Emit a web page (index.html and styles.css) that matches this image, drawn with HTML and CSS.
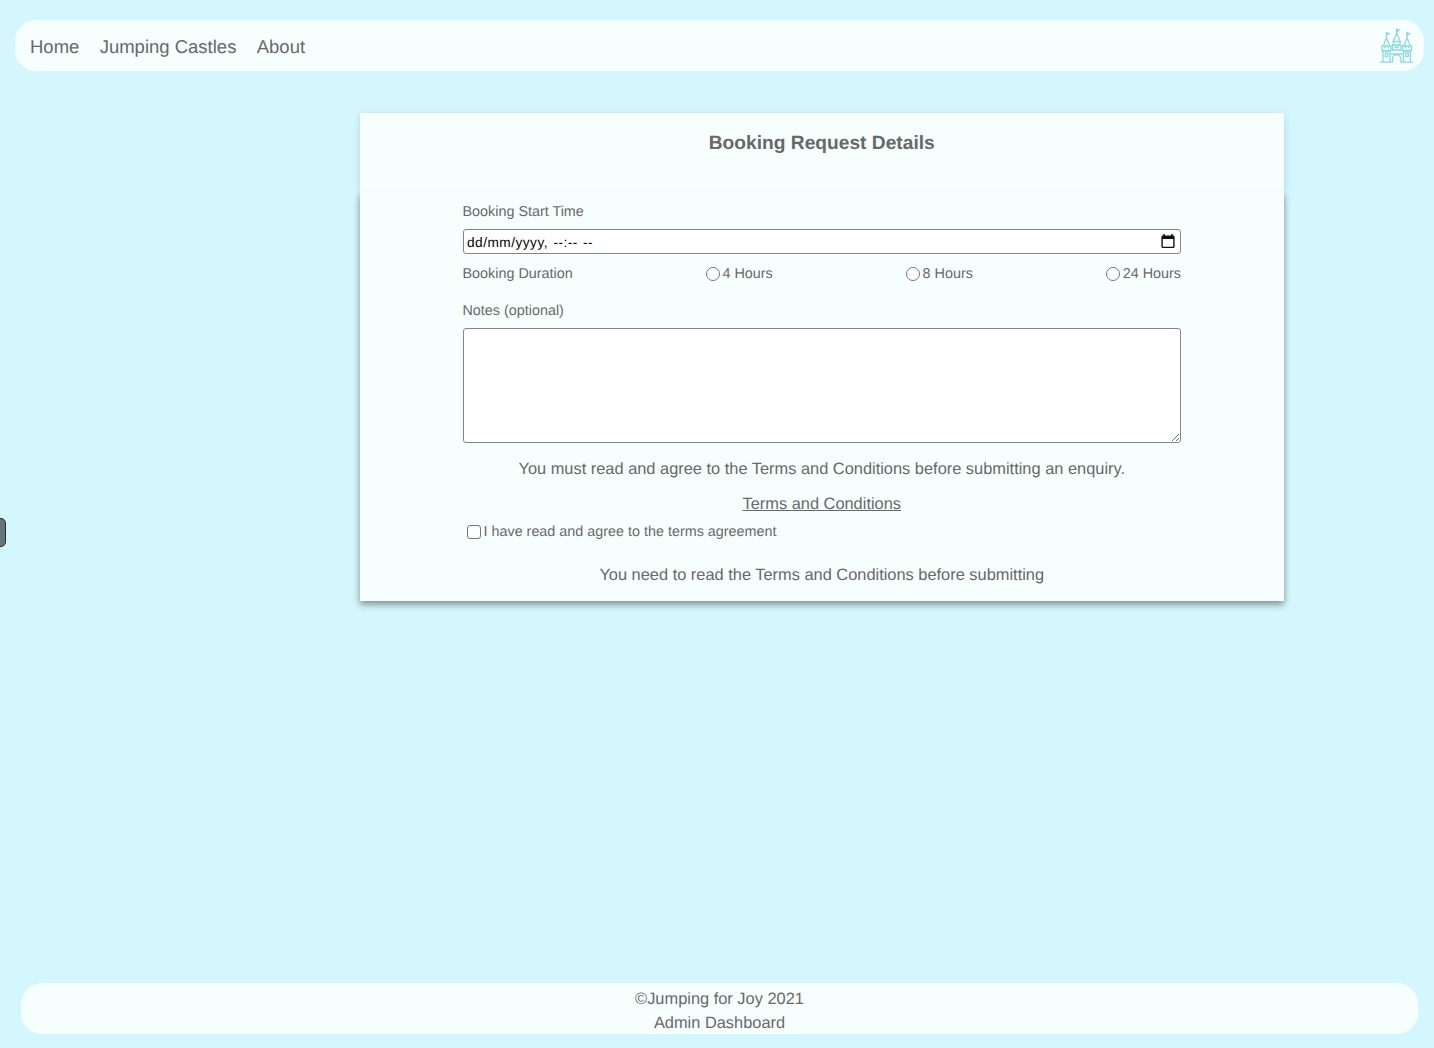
FILE: index.html
```html
<!DOCTYPE html>
<html lang="en">
<head>
<meta charset="utf-8">
<title>Jumping for Joy</title>
<link rel="stylesheet" href="styles.css">
</head>
<body>
<header class="navbar">
  <nav class="links">
    <a>Home</a>
    <a>Jumping Castles</a>
    <a>About</a>
  </nav>
  <svg class="logo" width="34" height="36" viewBox="0 0 34 36" fill="none" stroke="#8fd8de" stroke-width="1.3">
    <path d="M0 34.200H12.500V31a4.200 4.200 0 0 1 8.400 0v3.200H33"/>
    <path d="M3 34V23H10V34M23.500 34V23H30.500V34"/>
    <path d="M2 22.500V18H11V22.500ZM22.500 22.500V18H31.500V22.500ZM5 18v2.500M8 18v2.500M25.500 18v2.500M28.500 18v2.500"/>
    <path d="M3.500 17.500L6.500 9.500L9.500 17.500M24 17.500L27 9.500L30 17.500M6.500 10V4.500M27 10V4.500"/>
    <path fill="#8fd8de" d="M6.500 4.500l2.500 1.200l-2.500 1.500zM27 4.500l2.500 1.200l-2.500 1.500zM16.700 1l2.500 1.200l-2.500 1.500z"/>
    <path d="M16.700 6.500V1M13 13.500L16.700 5.500L20.400 13.500ZM13.500 14V17M20 14V17M12.500 22V17H21V22ZM15.300 17v2.500h2.800V17M11 26H22.500"/>
    <rect x="5.300" y="25" width="2.500" height="3.500"/>
    <rect x="25.800" y="25" width="2.500" height="3.500"/>
  </svg>
</header>
<div class="side-tab"></div>
<main class="card">
  <h1 class="title">Booking Request Details</h1>
  <form class="booking">
    <div class="label start-label">Booking Start Time</div>
    <div class="date-field">
      <span class="date-text">dd/mm/yyyy, <span class="time-text">--:-- --</span></span>
      <svg width="14" height="15" viewBox="0 0 14 15"><path fill="#111" fill-rule="evenodd" d="M2.300 0h1.500v1.500h6.400V0h1.500v1.500h.6a1.300 1.300 0 0 1 1.300 1.300v10a1.300 1.300 0 0 1-1.300 1.300H1.700a1.300 1.300 0 0 1-1.300-1.300v-10a1.300 1.300 0 0 1 1.300-1.300h.6zM1.800 5v7.700h10.400V5z"/></svg>
    </div>
    <div class="duration">
      <span class="label">Booking Duration</span>
      <label class="option"><input type="radio" name="hours"><span>4 Hours</span></label>
      <label class="option"><input type="radio" name="hours"><span>8 Hours</span></label>
      <label class="option"><input type="radio" name="hours"><span>24 Hours</span></label>
    </div>
    <div class="label notes-label">Notes (optional)</div>
    <textarea class="notes"></textarea>
    <p class="message must">You must read and agree to the Terms and Conditions before submitting an enquiry.</p>
    <p class="message terms"><a>Terms and Conditions</a></p>
    <label class="agree"><input type="checkbox"><span>I have read and agree to the terms agreement</span></label>
    <p class="message need">You need to read the Terms and Conditions before submitting</p>
  </form>
</main>
<footer class="footer">
  <span>©Jumping for Joy 2021</span>
  <span>Admin Dashboard</span>
</footer>
</body>
</html>
```
FILE: styles.css
```css
* { box-sizing: border-box; }
body {
  margin: 0;
  height: 1048px;
  padding: 20px 10px 14px 15px;
  display: flex;
  flex-direction: column;
  overflow: hidden;
  background: #d3f7fd;
  color: #686868;
  font: 16.4px "Liberation Sans", Arial, sans-serif;
  text-rendering: geometricPrecision;
}
.navbar {
  height: 51px;
  border-radius: 21px;
  background: #f6fffe;
  display: flex;
  align-items: center;
  justify-content: space-between;
  padding: 0 10px 0 15px;
}
.links { display: flex; gap: 20.3px; font-size: 18.5px; line-height: 24px; padding-top: 2px; }
.logo { display: block; }
.side-tab {
  position: absolute;
  left: -10px;
  top: 518px;
  width: 16px;
  height: 29px;
  border: 1.5px solid #263033;
  border-radius: 5px;
  background: #657578;
}
.card { width: 923.5px; margin: 42px 0 0 345px; }
.title {
  margin: 0;
  height: 79px;
  padding-top: 19px;
  text-align: center;
  font-size: 19.2px;
  line-height: 24px;
  background: linear-gradient(#f6fffe 74px, #f2fbfa 79px);
  box-shadow: 0 2px 8px rgba(0, 0, 0, .13);
}
.booking {
  position: relative;
  height: 409px;
  padding: 10px 102.5px 0;
  background: #f6fffe;
  box-shadow: 0 4px 8px rgba(0, 0, 0, .2), 0 3px 6px rgba(0, 0, 0, .25);
  clip-path: inset(0 -20px -20px -20px);
  display: flex;
  flex-direction: column;
}
.label, .option, .agree { font-size: 14.36px; line-height: 20px; }
.start-label { margin-bottom: 7px; }
.date-field {
  height: 25px;
  flex: none;
  border: 1.5px solid #858585;
  border-radius: 3px;
  background: #fff;
  color: #000;
  display: flex;
  align-items: center;
  justify-content: space-between;
  padding: 0 5px 0 3.5px;
}
.date-text { font-size: 13.65px; letter-spacing: .5px; padding-top: 1px; white-space: nowrap; }
.time-text { margin-left: 1.2px; letter-spacing: .45px; word-spacing: 1px; }
.duration { display: flex; justify-content: space-between; margin-top: 10px; }
.option, .agree { display: flex; align-items: center; gap: 3px; }
.option input, .agree input {
  appearance: none;
  width: 14px;
  height: 14px;
  margin: 0;
  border: 1px solid #767676;
  background: #fff;
}
.option input { border-radius: 50%; }
.agree input { border-radius: 3px; }
.notes-label { margin-top: 17px; }
.notes {
  height: 115px;
  flex: none;
  margin: 7px 0 0;
  border: 1.5px solid #858585;
  border-radius: 3px;
  background: #fff;
  resize: vertical;
}
.message { margin: 0; text-align: center; line-height: 20px; }
.must { margin-top: 16px; }
.terms { margin-top: 15px; text-decoration: underline; }
.agree { margin: 8px 0 0 4px; }
.need { margin-top: 23px; }
.footer {
  height: 51px;
  margin: auto 6px 0;
  border-radius: 21px;
  background: #f6fffe;
  display: flex;
  flex-direction: column;
  align-items: center;
  line-height: 23.5px;
  padding: 5px 0 0;
}
```
